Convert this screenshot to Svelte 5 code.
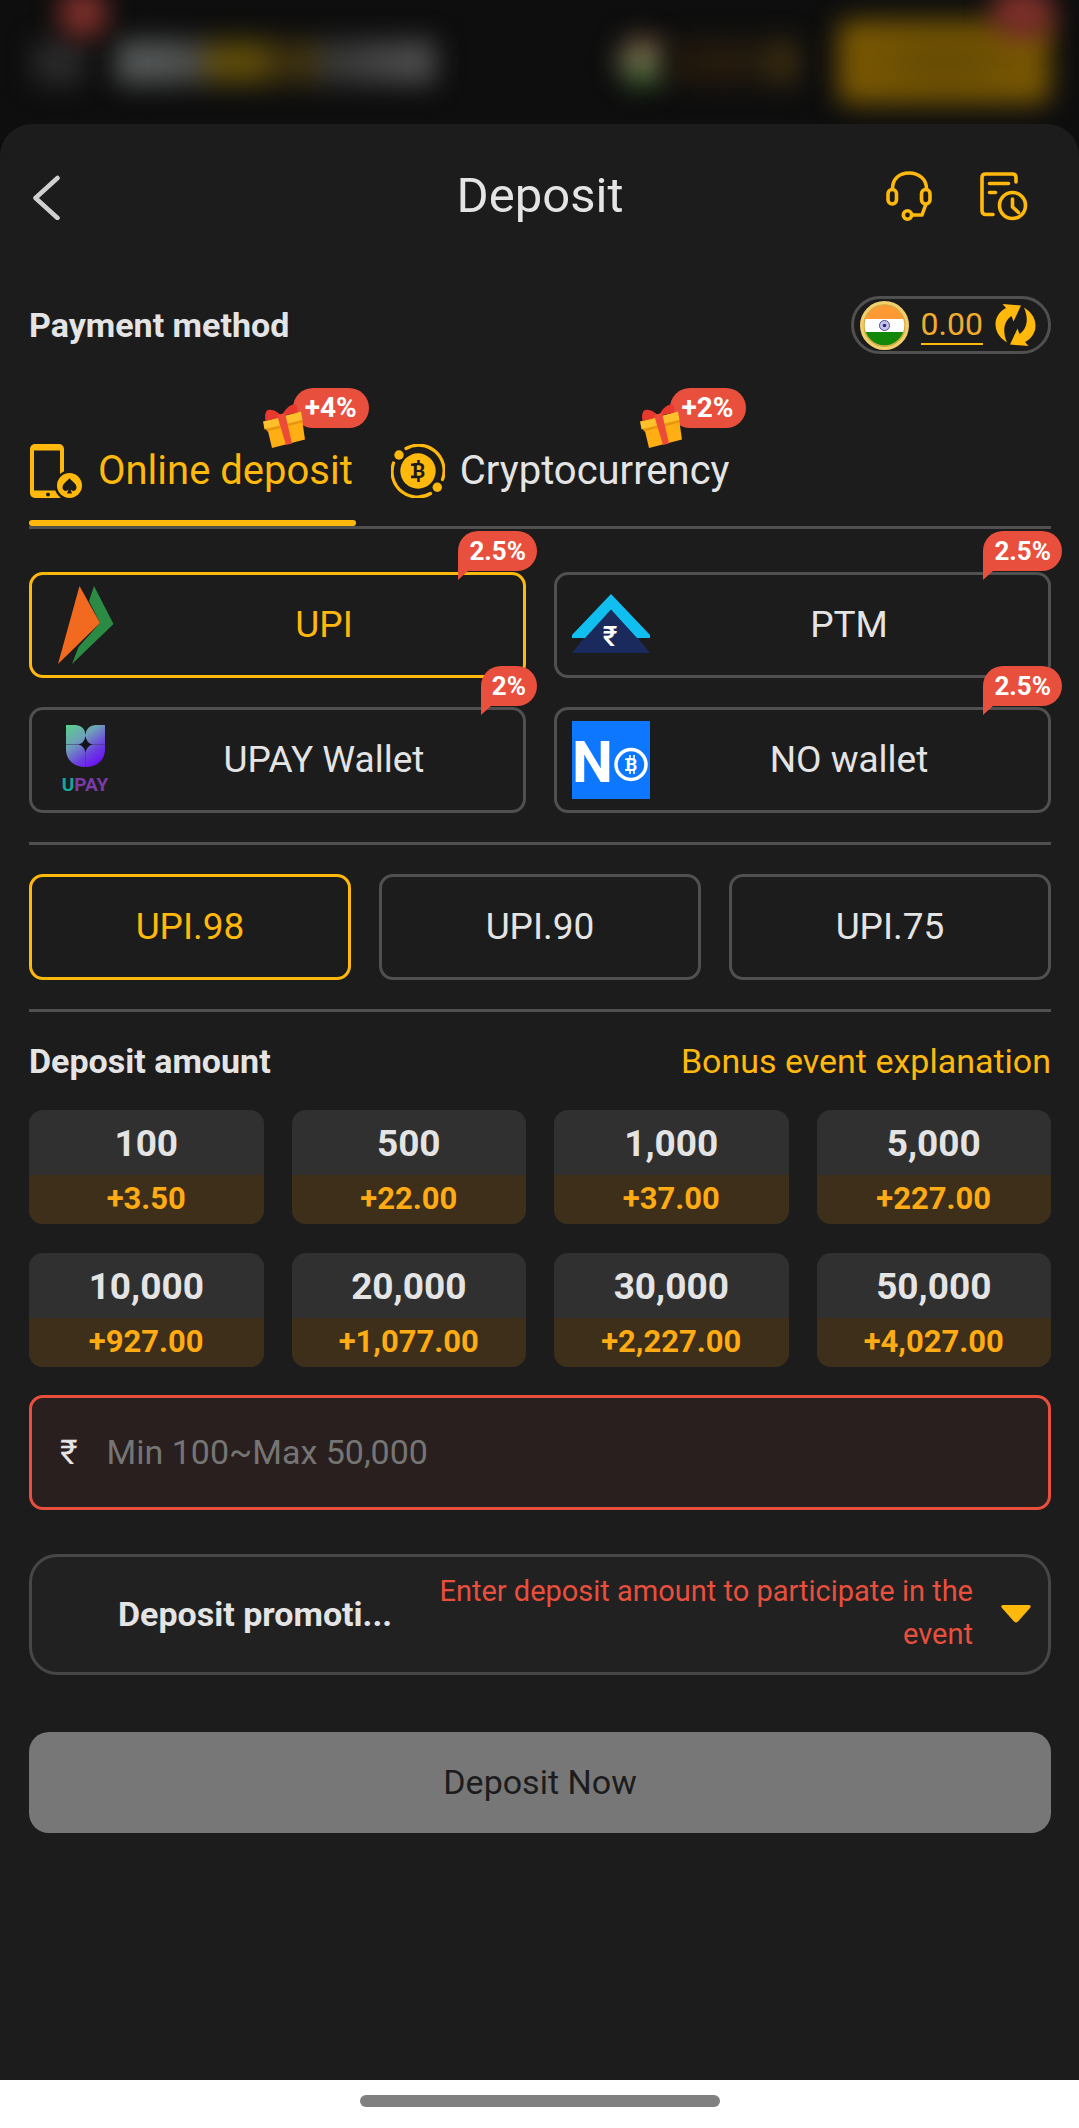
<script lang="ts">
  interface Channel {
    id: string
    name: string
    bonus: string
  }

  const methods: Channel[] = [
    { id: 'upi', name: 'UPI', bonus: '2.5%' },
    { id: 'ptm', name: 'PTM', bonus: '2.5%' },
    { id: 'upay', name: 'UPAY Wallet', bonus: '2%' },
    { id: 'no', name: 'NO wallet', bonus: '2.5%' }
  ]

  const tabs: Channel[] = [
    { id: 'online', name: 'Online deposit', bonus: '+4%' },
    { id: 'crypto', name: 'Cryptocurrency', bonus: '+2%' }
  ]

  const routes = ['UPI.98', 'UPI.90', 'UPI.75']

  const presets = [
    { value: 100, bonus: '+3.50' },
    { value: 500, bonus: '+22.00' },
    { value: 1000, bonus: '+37.00' },
    { value: 5000, bonus: '+227.00' },
    { value: 10000, bonus: '+927.00' },
    { value: 20000, bonus: '+1,077.00' },
    { value: 30000, bonus: '+2,227.00' },
    { value: 50000, bonus: '+4,027.00' }
  ]

  let tab = $state('online')
  let method = $state('upi')
  let route = $state('UPI.98')
  let amount = $state('')

  let valid = $derived(Number(amount) >= 100 && Number(amount) <= 50000)
</script>

<div class="page">
  <!-- site header, dimmed and blurred behind the sheet -->
  <div class="backdrop" aria-hidden="true">
    <span class="blob menu"></span>
    <span class="blob logo"></span>
    <span class="blob flag"></span>
    <span class="blob balance"></span>
    <span class="blob cta"></span>
    <span class="blob dot dot-left"></span>
    <span class="blob dot dot-right"></span>
  </div>

  <main class="sheet">
    <header class="header">
      <button class="icon-btn" aria-label="Back">
        <svg width="32" height="48" viewBox="0 0 32 48" fill="none" stroke="#d0d0d0" stroke-width="4.5" stroke-linecap="round" stroke-linejoin="round">
          <path d="M28.5 6 6.500 26 28.500 46" />
        </svg>
      </button>
      <h1>Deposit</h1>
      <div class="actions">
        <button class="icon-btn" aria-label="Customer service">
          <svg width="46" height="50" viewBox="0 0 46 50" fill="none" stroke="#ffb80c" stroke-width="3.6">
            <path d="M6.5 18C6.500 8 13 2 23 2s17.500 6 17.500 16" />
            <rect x="2" y="18.500" width="8.500" height="14.500" rx="4.200" />
            <rect x="35.500" y="18.500" width="8.500" height="14.500" rx="4.200" />
            <path d="M40 33 36 44h-9" stroke-linejoin="round" />
            <circle cx="21.500" cy="44" r="4.200" />
          </svg>
        </button>
        <button class="icon-btn" aria-label="Deposit records">
          <svg width="48" height="50" viewBox="0 0 48 50" fill="none" stroke="#ffb80c" stroke-width="3.6" stroke-linecap="round" stroke-linejoin="round">
            <path d="M36 11V6.500q0-3.500-3.500-3.500H5.500Q2 3 2 6.500v33q0 4 4 4h7" />
            <path d="M9.500 12.500h19M9.500 21.500h6" />
            <circle cx="32.500" cy="34.500" r="13" />
            <path d="M32.500 28v8l6 5.500" />
          </svg>
        </button>
      </div>
    </header>

    <section class="row payment">
      <h2>Payment method</h2>
      <div class="wallet">
        <svg width="49" height="49" viewBox="0 0 49 49" role="img" aria-label="India">
          <defs><clipPath id="flag"><circle cx="24.5" cy="24.5" r="21" /></clipPath></defs>
          <circle cx="24.5" cy="24.5" r="24.5" fill="#f3d06c" />
          <g clip-path="url(#flag)">
            <rect width="49" height="18" fill="#ff9933" />
            <rect y="18" width="49" height="13" fill="#fff" />
            <rect y="31" width="49" height="18" fill="#138808" />
          </g>
          <circle cx="24.5" cy="24.5" r="20.5" fill="none" stroke="#d9ab47" stroke-width="1.5" />
          <circle cx="24.5" cy="24.5" r="5" fill="#c6c6ea" stroke="#4a4a9c" stroke-width="1" />
          <circle cx="24.5" cy="24.5" r="1.8" fill="#28287c" />
        </svg>
        <a class="balance-link" href="#balance">0.00</a>
        <button class="icon-btn" aria-label="Refresh balance">
          <svg width="41" height="42" viewBox="0 0 41 42" fill="#ffb80c">
            <path d="M7.500 0 26 1.500 18.500 17.500 16.500 12C9 17 7 27 12 38.500 3 33 .5 26 .5 20 .5 13 5 7 11 4Z" />
            <path d="M33.500 42 15 40.500 22.500 24.500 24.500 30C32 25 34 15 29 3.500 38 9 40.500 16 40.500 22 40.500 29 36 35 30 38Z" />
          </svg>
        </button>
      </div>
    </section>

    <div class="tabs" role="tablist">
      {#each tabs as t}
        <button class="tab" class:active={tab === t.id} role="tab" aria-selected={tab === t.id} onclick={() => (tab = t.id)}>
          {#if t.id === 'online'}
            <svg width="54" height="54" viewBox="0 0 54 54" fill="#ffb80c">
              <rect x="1" width="34" height="54" rx="5" />
              <rect x="5" y="6.5" width="26" height="40" fill="#1c1c1c" />
              <circle cx="19" cy="50.5" r="2" fill="#1c1c1c" />
              <circle cx="40.5" cy="41.5" r="15" fill="#1c1c1c" />
              <circle cx="40.5" cy="41.5" r="12.5" />
              <path d="M40.500 34c2 3.500 7 5 7 9.500 0 3.500-4 4.500-6 2l1.500 4h-5l1.500-4c-2 2.500-6 1.500-6-2 0-4.500 5-6 7-9.500Z" fill="#1c1c1c" />
            </svg>
          {:else}
            <svg width="54" height="54" viewBox="0 0 54 54">
              <g fill="none" stroke="#ffb80c" stroke-width="3.2" stroke-linecap="round">
                <path d="M15 4.500A25.500 25.500 0 0 1 51.500 35.500" />
                <path d="M39.500 49.500A25.500 25.500 0 0 1 2.500 19" />
              </g>
              <g fill="#ffb80c">
                <circle cx="8" cy="11" r="4.7" />
                <circle cx="46.3" cy="43.3" r="4.7" />
                <circle cx="27" cy="27" r="17.7" />
              </g>
              <text class="coin" x="28" y="34" font-size="20">B</text>
              <path d="M27.500 16v4M27.500 34v4M20 20.800h6M20 32.900h6" stroke="#1c1c1c" stroke-width="2.6" />
            </svg>
          {/if}
          <span class="tab-name">{t.name}</span>
          <span class="tab-badge">
            <svg class="gift" width="43" height="45" viewBox="0 0 43 45">
              <path d="m4 23 35-8 3 20.500L9 44Z" fill="#ffae14" />
              <path d="M0 17.500 38 7.500l1.500 8.500-38 9.500Z" fill="#ffc02c" />
              <path d="m3 25 36-9 .5 2.500L4 27.500Z" fill="#e89610" />
              <path d="M19 13C15 7 7 4 3.500 7 1.500 10 2 14 2.500 17Z" fill="#e8392f" />
              <path d="M19 12C22 5 28-1 33 1c1.500 2 1 4 1.500 7.500Z" fill="#e8392f" />
              <path d="m14 11 8-2 7 30.500-6 1.500Z" fill="#ee4a38" />
            </svg>
            {t.bonus}
          </span>
        </button>
      {/each}
    </div>

    <section class="grid methods">
      {#each methods as m}
        <button class="option" class:active={method === m.id} onclick={() => (method = m.id)}>
          {#if m.id === 'upi'}
            <svg width="78" height="78" viewBox="0 0 78 78">
              <path d="m47 0 19.500 38L25 78l6.500-17L53 37 42 15Z" fill="#2b8a43" />
              <path d="M32.500 0 53 37 11 78Z" fill="#f26a1f" />
            </svg>
          {:else if m.id === 'ptm'}
            <svg width="78" height="78" viewBox="0 0 78 78">
              <path d="m39 24 27 28 12 15H0l12-15Z" fill="#1b2a5c" />
              <path d="m39 8 39 41v3H65L39 23.500 13 52H0v-3Z" fill="#10bff0" />
              <text x="38" y="60" font-size="28" font-weight="500" fill="#fff" text-anchor="middle">₹</text>
            </svg>
          {:else if m.id === 'upay'}
            <svg width="78" height="78" viewBox="0 0 78 78">
              <defs>
                <linearGradient id="upay" x1="0" y1="0" x2=".7" y2="1">
                  <stop offset="0" stop-color="#58d08c" />
                  <stop offset=".4" stop-color="#6fa0b8" />
                  <stop offset=".75" stop-color="#6b3fe0" />
                  <stop offset="1" stop-color="#6a12f5" />
                </linearGradient>
              </defs>
              <path d="M19 4h10q9 1 9.500 10Q39 5 48 4h10v24c0 11-8 18-19.500 18S19 39 19 28Z" fill="url(#upay)" />
              <path d="M38.500 15q1 7 7 8.500-6 1.500-7 8.500-1-7-7-8.500 6-1.500 7-8.500Z" fill="#14121f" />
              <path d="M19 23.500h13M45 23.500h13M38.500 32v14" stroke="#3f3a70" stroke-width=".6" />
              <text class="upay" x="38" y="70" text-anchor="middle" fill="#7a3aa8"><tspan fill="#14a89a">U</tspan>PAY</text>
            </svg>
          {:else}
            <svg width="78" height="78" viewBox="0 0 78 78">
              <rect width="78" height="78" fill="#0d78ff" />
              <text x="0" y="61" font-size="58" font-weight="700" fill="#fff">N</text>
              <circle cx="59" cy="43.5" r="15" fill="none" stroke="#fff" stroke-width="3.5" />
              <text x="59.5" y="50" font-size="18" font-weight="700" fill="#fff" text-anchor="middle">B</text>
              <path d="M58 34v4M62 34v4M58 49v4M62 49v4M53 38.200h5M53 48.900h5" stroke="#fff" stroke-width="1.6" />
            </svg>
          {/if}
          <span class="option-name">{m.name}</span>
          <span class="bubble">{m.bonus}</span>
        </button>
      {/each}
    </section>

    <hr />

    <section class="grid routes">
      {#each routes as r}
        <button class="option" class:active={route === r} onclick={() => (route = r)}>
          <span class="option-name">{r}</span>
        </button>
      {/each}
    </section>

    <hr />

    <section class="row amount-head">
      <h2>Deposit amount</h2>
      <a href="#bonus">Bonus event explanation</a>
    </section>

    <section class="grid presets">
      {#each presets as p}
        <button class="preset" onclick={() => (amount = String(p.value))}>
          <span class="preset-value">{p.value.toLocaleString('en-US')}</span>
          <span class="preset-bonus">{p.bonus}</span>
        </button>
      {/each}
    </section>

    <div class="field" class:error={!valid}>
      <label for="amount">₹</label>
      <input id="amount" type="text" inputmode="numeric" placeholder="Min 100~Max 50,000" bind:value={amount} />
    </div>

    <button class="promo" aria-haspopup="listbox">
      <span class="promo-title">Deposit promoti...</span>
      <span class="promo-hint">{valid ? '' : 'Enter deposit amount to participate in the event'}</span>
      <svg width="30" height="18" viewBox="0 0 30 18" fill="#ffb80c">
        <path d="M2.500 0h25q3.500 0 1.500 3L17 16.500q-2 2-4 0L1 3Q-1 0 2.500 0Z" />
      </svg>
    </button>

    <button class="submit" disabled={!valid}>Deposit Now</button>
  </main>

  <footer class="system-nav"><span></span></footer>
</div>

<style>
  :global(body) {
    margin: 0;
    background: #0e0e0e;
  }

  .page {
    --gold: #ffb80c;
    --text: #e4e4e4;
    --line: #505050;
    --red: #e94f3d;
    display: flex;
    flex-direction: column;
    min-height: 100vh;
    color: var(--text);
    font-family: Roboto, "Noto Sans", sans-serif;
    font-size: 34px;
  }

  button {
    padding: 0;
    border: 0;
    background: none;
    color: inherit;
    font: inherit;
    cursor: pointer;
  }

  svg {
    display: block;
    flex: none;
  }

  h1,
  h2 {
    margin: 0;
  }

  h1 {
    padding-bottom: 2px;
    font-size: 49px;
    font-weight: 400;
  }

  h2 {
    font-size: 34px;
    font-weight: 700;
  }

  hr {
    height: 3px;
    margin: 29px 0 0;
    border: 0;
    background: var(--line);
  }

  .backdrop {
    position: relative;
    display: flex;
    align-items: center;
    height: 124px;
    padding: 0 29px 0 34px;
    overflow: hidden;
  }

  .blob {
    height: 44px;
    filter: blur(13px);
  }

  .menu {
    width: 50px;
    background: #2a2a2a;
  }

  .logo {
    width: 320px;
    margin-left: 32px;
    background: linear-gradient(90deg, #535656 0 14%, #484848 25%, #5c4a0a 31% 44%, #352a10 52%, #42340c 60%, #343434 66%, #4b4b4b 92%);
  }

  .flag {
    width: 50px;
    height: 50px;
    margin-left: auto;
    border-radius: 50%;
    background: linear-gradient(#7a5234, #6a6a50, #245a1c);
  }

  .balance {
    width: 130px;
    background: linear-gradient(90deg, #1e170e, #281c0c 50%, #1e180e 65%, #3c2d10 90%);
  }

  .cta {
    width: 212px;
    height: 84px;
    margin-left: 40px;
    border-radius: 12px;
    background: radial-gradient(#674c03 20%, #785703 60%);
  }

  .dot {
    position: absolute;
    top: -12px;
    height: 50px;
    border-radius: 25px;
    background: #7c2f2a;
  }

  .dot-left {
    left: 58px;
    width: 50px;
  }

  .dot-right {
    right: 24px;
    width: 64px;
  }

  .sheet {
    flex: 1;
    padding: 0 28px 28px 29px;
    border-radius: 32px 32px 0 0;
    background: #1c1c1c;
  }

  .header {
    display: grid;
    grid-template-columns: 1fr auto 1fr;
    align-items: center;
    height: 144px;
  }

  .actions {
    display: flex;
    justify-content: flex-end;
    gap: 48px;
    padding-right: 23px;
  }

  .row {
    display: flex;
    align-items: center;
    justify-content: space-between;
  }

  .payment {
    margin-top: 28px;
  }

  .wallet {
    display: flex;
    align-items: center;
    gap: 12px;
    box-sizing: border-box;
    height: 58px;
    padding: 0 12px 0 6px;
    border: 3px solid var(--line);
    border-radius: 29px;
  }

  .balance-link {
    border-bottom: 2px solid var(--gold);
    color: #f0ad2e;
    font-size: 32px;
    line-height: 38px;
    text-decoration: none;
  }

  .tabs {
    display: flex;
    gap: 35px;
    margin-top: 68px;
    border-bottom: 3px solid var(--line);
  }

  .tab {
    position: relative;
    display: flex;
    align-items: center;
    gap: 15px;
    height: 104px;
    padding: 0 3px 6px 0;
    box-sizing: border-box;
    font-size: 40px;
  }

  .tab.active {
    color: var(--gold);
  }

  .tab.active::after {
    content: '';
    position: absolute;
    right: 0;
    bottom: 0;
    left: 0;
    height: 6px;
    border-radius: 3px;
    background: var(--gold);
  }

  .tab-name {
    padding-bottom: 2px;
  }

  .tab-badge {
    position: absolute;
    top: -34px;
    right: -13px;
    padding: 0 12px;
    border-radius: 20px;
    background: var(--red);
    color: #fff;
    font-size: 28px;
    font-weight: 700;
    line-height: 40px;
  }

  .gift {
    position: absolute;
    top: 16px;
    left: -30px;
  }

  .coin {
    fill: #1c1c1c;
    font-weight: 700;
    text-anchor: middle;
  }

  .upay {
    font-size: 19px;
    font-weight: 700;
  }

  .grid {
    display: grid;
    gap: 29px 28px;
  }

  .methods {
    grid-template-columns: repeat(2, 1fr);
    margin-top: 43px;
  }

  .routes {
    grid-template-columns: repeat(3, 1fr);
    margin-top: 29px;
  }

  .presets {
    grid-template-columns: repeat(4, 1fr);
  }

  .option {
    position: relative;
    display: flex;
    align-items: center;
    box-sizing: border-box;
    height: 106px;
    border: 3px solid var(--line);
    border-radius: 14px;
    font-size: 37px;
  }

  .methods .option {
    padding-left: 15px;
  }

  .option.active {
    border-color: var(--gold);
    color: var(--gold);
  }

  .option-name {
    flex: 1;
    padding-bottom: 2px;
    text-align: center;
  }

  .bubble {
    position: absolute;
    top: -44px;
    right: -14px;
    padding: 0 11px;
    border-radius: 20px 20px 20px 0;
    background: var(--red);
    color: #fff;
    font-size: 26px;
    font-weight: 700;
    line-height: 40px;
  }

  .bubble::after {
    content: '';
    position: absolute;
    top: 100%;
    left: 0;
    border-top: 9px solid var(--red);
    border-right: 10px solid transparent;
  }

  .amount-head {
    height: 98px;
  }

  .amount-head a {
    color: var(--gold);
    text-decoration: none;
  }

  .preset {
    display: flex;
    flex-direction: column;
    overflow: hidden;
    border-radius: 14px;
    background: #303030;
    font-weight: 700;
  }

  .preset-value {
    width: 100%;
    padding-top: 2px;
    font-size: 37px;
    line-height: 63px;
  }

  .preset-bonus {
    width: 100%;
    padding-bottom: 2px;
    background: #3d2f1a;
    color: #ffab14;
    font-size: 31px;
    line-height: 47px;
  }

  .field {
    display: flex;
    align-items: center;
    gap: 29px;
    box-sizing: border-box;
    height: 115px;
    margin-top: 28px;
    padding: 0 28px 2px;
    border: 3px solid var(--line);
    border-radius: 14px;
  }

  .field.error {
    border-color: var(--red);
    background: #291f1e;
  }

  .field input {
    flex: 1;
    min-width: 0;
    padding: 0;
    border: 0;
    outline: 0;
    background: none;
    color: var(--text);
    font: inherit;
  }

  .field input::placeholder {
    color: #757575;
    opacity: 1;
  }

  .promo {
    display: flex;
    align-items: center;
    box-sizing: border-box;
    width: 100%;
    min-height: 121px;
    margin-top: 44px;
    padding: 0 17px 2px 86px;
    border: 3px solid #474747;
    border-radius: 28px;
    background: #212121;
  }

  .promo-title {
    flex: none;
    font-weight: 700;
    white-space: nowrap;
  }

  .promo-hint {
    flex: 1;
    padding: 0 28px 2px 20px;
    color: var(--red);
    font-size: 29px;
    line-height: 43px;
    text-align: right;
  }

  .submit {
    display: block;
    width: 100%;
    height: 101px;
    margin-top: 57px;
    padding-bottom: 2px;
    border-radius: 20px;
    background: var(--gold);
    color: #1c1c1c;
  }

  .submit:disabled {
    background: #777;
    cursor: default;
  }

  .system-nav {
    display: flex;
    justify-content: center;
    height: 33px;
    padding-top: 15px;
    background: #fff;
  }

  .system-nav span {
    width: 360px;
    height: 12px;
    border-radius: 6px;
    background: #808080;
  }
</style>
